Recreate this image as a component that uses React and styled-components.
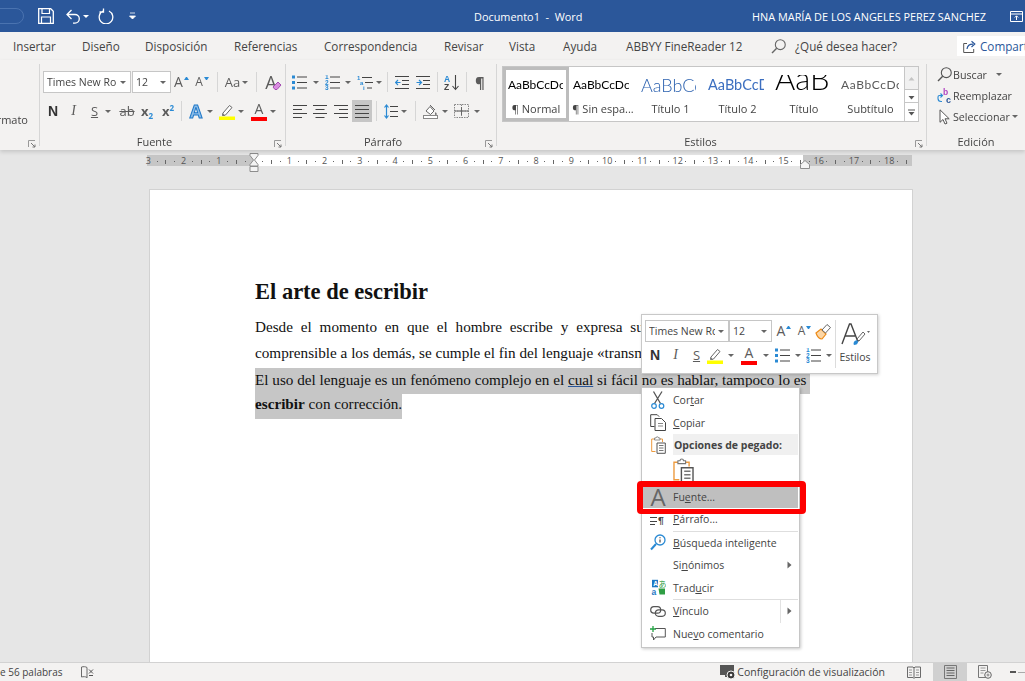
import * as React from "react";
import styled, { createGlobalStyle } from "styled-components";

const GlobalStyle = createGlobalStyle`
  html, body {
    margin: 0;
    padding: 0;
    background: #e6e6e6;
  }
  * {
    box-sizing: border-box;
  }
  svg {
    display: block;
    flex: none;
  }
`;

const UI_FONT = `"Open Sans", "Noto Sans", sans-serif`;
const GREY = "#5c5c5c";
const BLUE = "#2a8ad4";

const Svg = ({ w, h, children }) => (
  <svg width={w} height={h} viewBox={`0 0 ${w} ${h}`} fill="none">
    {children}
  </svg>
);

/* ---------- icons ---------- */

const SaveIcon = () => (
  <Svg w={16} h={16}>
    <path d="M.7.7h12l2.6 2.6v12H.7z" stroke="#fff" strokeWidth="1.3" />
    <path d="M4 1v4.5h7.5V1M3.5 15V9h9v6" stroke="#fff" strokeWidth="1.2" />
  </Svg>
);
const UndoIcon = () => (
  <Svg w={14} h={15}>
    <path d="M1.5 5.5H9a4.3 4.3 0 0 1 0 8.6H7M5.5 1L1 5.5 5.5 10" stroke="#fff" strokeWidth="1.3" />
  </Svg>
);
const RedoIcon = () => (
  <Svg w={16} h={16}>
    <path d="M5 3a6.8 6.8 0 1 0 6 0M5.5.5V4h-4" stroke="#fff" strokeWidth="1.3" />
  </Svg>
);
const CustomizeIcon = () => (
  <Svg w={7} h={8}>
    <path d="M1 1h5M.5 4h6l-3 3z" stroke="#fff" fill="#fff" strokeWidth=".8" />
  </Svg>
);
const RestoreIcon = () => (
  <Svg w={13} h={11}>
    <path d="M.5.5h12v10H.5zM.5 3h12M6.5 9V5M4.8 6.5l1.7-1.7 1.7 1.7" stroke="#fff" />
  </Svg>
);
const SearchIcon = ({ size = 15, color = "#666" }) => (
  <Svg w={size} h={size}>
    <circle cx={size * 0.62} cy={size * 0.38} r={size * 0.33} stroke={color} strokeWidth="1.1" />
    <path d={`M${size * 0.38} ${size * 0.62}L1 ${size - 1}`} stroke={color} strokeWidth="1.4" />
  </Svg>
);
const ShareIcon = () => (
  <Svg w={13} h={13}>
    <path d="M4 3.5H.7v9h10V9" stroke="#555" />
    <path d="M4 9c.4-3.3 3-4.8 6-4.8M8.5 1.2L11.8 4 8.5 7" stroke="#2b579a" strokeWidth="1.2" />
  </Svg>
);
const LauncherIcon = () => (
  <Svg w={8} h={8}>
    <path d="M.5 7V.5H7" stroke="#999" />
    <path d="M3 3l4 4M7 4.5V7H4.5" stroke="#777" />
  </Svg>
);
const Eraser = () => (
  <Svg w={10} h={10}>
    <path d="M1 6l5-5 3 3-4 4.5H3z" fill="#d98ce0" stroke="#a24bb0" />
  </Svg>
);
const PenBar = () => (
  <Svg w={16} h={17}>
    <path d="M4 10l6.5-7.5 2.5 2L6.5 12l-3 .5z" stroke="#666" fill="#fff" />
    <path d="M3.5 11l2 1.5" stroke="#666" />
    <rect x="0" y="13.5" width="16" height="3.5" fill="#ffff00" />
  </Svg>
);
const marker = (kind, i, y) => {
  if (kind === "bullet") return <rect key={i} x="0" y={y - 1.5} width="3" height="3" fill={BLUE} />;
  return (
    <text key={i} x="0" y={y + 2.3} fontSize="6.5" fontFamily="Liberation Sans, sans-serif" fontWeight="700" fill={BLUE}>
      {i + 1}
    </text>
  );
};
const ListIcon = ({ kind = "bullet" }) => (
  <Svg w={15} h={15}>
    {[2, 7.5, 13].map((y, i) => (
      <React.Fragment key={y}>
        {marker(kind, i, y)}
        <path d={`M5 ${y}h10`} stroke="#444" />
      </React.Fragment>
    ))}
  </Svg>
);
const MultilevelIcon = () => (
  <Svg w={16} h={15}>
    <text x="0" y="5" fontSize="6" fontWeight="700" fontFamily="Liberation Sans, sans-serif" fill={BLUE}>1</text>
    <text x="3" y="10" fontSize="6" fontWeight="700" fontFamily="Liberation Sans, sans-serif" fill={BLUE}>a</text>
    <text x="6" y="15" fontSize="6" fontWeight="700" fontFamily="Liberation Sans, sans-serif" fill={BLUE}>i</text>
    <path d="M5 2.5h10M8 7.5h8M10 13h5" stroke="#444" />
  </Svg>
);
const IndentIcon = ({ out }) => (
  <Svg w={14} h={13}>
    <path d="M0 .5h14M0 12.5h14M7 4.5h7M7 8.5h7" stroke="#444" />
    <path d={out ? "M5.5 6.5H.5M3 4L.5 6.5 3 9" : "M.5 6.5h5M3 4l2.5 2.5L3 9"} stroke={BLUE} strokeWidth="1.2" />
  </Svg>
);
const SortIcon = () => (
  <Svg w={16} h={17}>
    <text x="0" y="7.5" fontSize="8.5" fontWeight="700" fontFamily="Liberation Sans, sans-serif" fill={BLUE}>A</text>
    <text x="0" y="16" fontSize="8.5" fontWeight="700" fontFamily="Liberation Sans, sans-serif" fill="#444">Z</text>
    <path d="M11.5 1v14M8.5 12l3 3.5 3-3.5" stroke="#444" strokeWidth="1.1" />
  </Svg>
);
const ALIGN = {
  left: ["M0 .5h14", "M0 4.5h9", "M0 8.5h14", "M0 12.5h9"],
  center: ["M0 .5h14", "M2.5 4.5h9", "M0 8.5h14", "M2.5 12.5h9"],
  right: ["M0 .5h14", "M5 4.5h9", "M0 8.5h14", "M5 12.5h9"],
  justify: ["M0 .5h14", "M0 4.5h14", "M0 8.5h14", "M0 12.5h14"],
};
const AlignIcon = ({ mode }) => (
  <Svg w={14} h={13}>
    {ALIGN[mode].map((d) => (
      <path key={d} d={d} stroke="#444" />
    ))}
  </Svg>
);
const LineSpacingIcon = () => (
  <Svg w={14} h={15}>
    <path d="M6 2.5h8M6 7.5h8M6 12.5h8" stroke="#444" />
    <path d="M2.5 1v13M.5 3.5l2-2.5 2 2.5M.5 11.5l2 2.5 2-2.5" stroke={BLUE} strokeWidth="1.2" />
  </Svg>
);
const BucketIcon = () => (
  <Svg w={15} h={15}>
    <path d="M3 7l4-4.5L11 7l-3.5 3.5z" stroke="#666" fill="#fff" />
    <path d="M7 1l5 5" stroke="#666" />
    <path d="M12.5 8c1 1.3 1.5 2 1 2.7-.5.5-1.5.3-1.5-.7z" fill="#666" />
    <rect x=".5" y="11.5" width="14" height="3" fill="#fff" stroke="#888" />
  </Svg>
);
const BordersIcon = () => (
  <Svg w={15} h={14}>
    <path d="M.5.5h14v13H.5zM7.5.5v13M.5 7h14" stroke="#888" strokeDasharray="1.5 1" />
    <path d="M.5 7h14M7.5 3v8" stroke="#666" />
  </Svg>
);
const ScrollArrow = ({ dir = "down", bar, color = "#555" }) => (
  <Svg w={7} h={7}>
    {bar && <path d="M0 1h7" stroke={color} />}
    <path d={dir === "up" ? "M3.5 2l3 3.5h-6z" : "M.5 3h6l-3 3.5z"} fill={color} />
  </Svg>
);
const ReplaceIcon = () => (
  <Svg w={16} h={16}>
    <text x="6" y="7" fontSize="8.5" fontWeight="700" fontFamily="Liberation Sans, sans-serif" fill="#b146c2">b</text>
    <text x="9" y="15" fontSize="9" fontWeight="700" fontFamily="Liberation Sans, sans-serif" fill="#2b579a">c</text>
    <path d="M5 7.5H2.5A1.5 1.5 0 0 0 1 9v1.5a3 3 0 0 0 3 3h1M3.5 5.5l2 2-2 2" stroke={BLUE} strokeWidth="1.1" />
  </Svg>
);
const CursorIcon = () => (
  <Svg w={12} h={16}>
    <path d="M1 .8v12.5l3-2.8 2 4.5 2-.8-2-4.4h4.2z" stroke="#555" fill="#fff" />
  </Svg>
);
const PaintIcon = () => (
  <Svg w={17} h={17}>
    <path d="M1 10l5-4 5 5-4 5c-2.5 0-5-3-6-6z" fill="#fbd6a6" stroke="#ed8b17" strokeWidth="1.2" />
    <path d="M7 7l5-5.5 3.5 3L10.5 10z" fill="#fff" stroke="#666" />
  </Svg>
);
const StylesIcon = () => (
  <Svg w={30} h={24}>
    <path d="M2 21L9.5 1H11l7 18M5 13h10" stroke="#444" strokeWidth="1.4" />
    <path d="M14 22c-1.5-2 1-5.5 3.5-4.5 1 1 .5 3-1 4z" fill={BLUE} />
    <path d="M17 16l6-7 2 2-6 7z" fill="#fff" stroke="#666" />
    <path d="M27 8h3l-1.5 2z" fill="#666" />
  </Svg>
);
const ScissorsIcon = () => (
  <Svg w={14} h={18}>
    <path d="M2.5.5l7 12M11 .5l-7.5 12" stroke="#555" strokeWidth="1.3" />
    <circle cx="3" cy="15" r="2.3" stroke={BLUE} strokeWidth="1.2" />
    <circle cx="10.5" cy="15" r="2.3" stroke={BLUE} strokeWidth="1.2" />
  </Svg>
);
const CopyIcon = () => (
  <Svg w={16} h={17}>
    <path d="M4.5 12.5H.7V.7h6.5l2 2" stroke="#444" />
    <path d="M5 4.5h6.5l4 4v8H5z" fill="#fff" stroke="#444" />
    <path d="M8 9.5h5M8 12h5" stroke="#888" />
  </Svg>
);
const ClipboardIcon = ({ big }) => {
  const s = big ? 1.4 : 1;
  return (
    <svg width={15 * s} height={18 * s} viewBox="0 0 15 18" fill="none">
      <path d="M4.5 15.5H.7V3h3M9 3h2.5v3" stroke="#ed9b40" />
      <path d="M3.5 4V2H5a1.2 1.2 0 0 1 2.5 0H9v2z" fill="#fff" stroke="#777" strokeWidth=".8" />
      <path d="M6 7h8.300v10.300H6z" fill="#fff" stroke="#555" />
      <path d="M8 9.5h4.5M8 12h4.5M8 14.5h4.5" stroke="#777" />
    </svg>
  );
};
const ParagraphIcon = () => (
  <Svg w={16} h={12}>
    <path d="M0 .5h16M0 4.5h7M0 8.5h7M0 11.5h5" stroke="#444" />
    <text x="8" y="11.5" fontSize="10.5" fontWeight="700" fontFamily="Liberation Sans, sans-serif" fill="#444">¶</text>
  </Svg>
);
const SmartIcon = () => (
  <Svg w={16} h={17}>
    <circle cx="10" cy="6" r="5" stroke={BLUE} strokeWidth="1.3" />
    <path d="M6 10l-5 5.5" stroke={BLUE} strokeWidth="2" />
    <path d="M10 5.5v3M10 3.3v1" stroke="#444" strokeWidth="1.2" />
  </Svg>
);
const TranslateIcon = () => (
  <Svg w={15} h={17}>
    <path d="M1 .8h6v7.5H1z" fill="#1e79c4" />
    <text x="2.2" y="6.8" fontSize="6.5" fontWeight="700" fontFamily="Liberation Sans, sans-serif" fill="#fff">A</text>
    <text x="7.5" y="8" fontSize="8" fontFamily="Noto Sans CJK JP, sans-serif" fill="#2f9e44">あ</text>
    <text x=".5" y="16" fontSize="8.5" fontWeight="700" fontFamily="Liberation Sans, sans-serif" fill="#1e79c4">a</text>
    <path d="M7.5 9.5H14v6H8.5" fill="#2f9e44" />
  </Svg>
);
const LinkIcon = () => (
  <Svg w={16} h={11}>
    <rect x=".7" y=".7" width="10" height="6.5" rx="3.2" stroke="#555" strokeWidth="1.2" />
    <rect x="5.3" y="3.8" width="10" height="6.5" rx="3.2" stroke="#555" strokeWidth="1.2" />
  </Svg>
);
const CommentIcon = () => (
  <Svg w={16} h={15}>
    <path d="M5 2.5h10.3V11H6l-2.500 3v-3H2V7" stroke="#555" />
    <path d="M3 0v6M0 3h6" stroke="#25a244" strokeWidth="1.3" />
  </Svg>
);
const MenuArrow = () => (
  <Svg w={5} h={8}>
    <path d="M.5.5l4 3.5-4 3.5z" fill="#666" />
  </Svg>
);
const HourglassMarker = () => (
  <Svg w={10} h={19}>
    <path d="M1 .5h8v2L5.5 7 9 11.5V13H1v-1.500L4.5 7 1 2.5z" fill="#f4f4f4" stroke="#8d8d8d" />
    <path d="M1 13.5h8v5H1z" fill="#f4f4f4" stroke="#8d8d8d" />
  </Svg>
);
const RightIndentMarker = () => (
  <Svg w={10} h={9}>
    <path d="M.5 8.5v-4L5 .5l4.500 4v4z" fill="#f4f4f4" stroke="#8d8d8d" />
  </Svg>
);
const DisplayIcon = () => (
  <Svg w={16} h={15}>
    <path d="M0 0h14v10H0z" fill="#555" />
    <path d="M5 10h4v2H5z" fill="#555" />
    <circle cx="11" cy="10" r="4" fill="#3a3a3a" stroke="#f3f2f1" />
    <circle cx="11" cy="10" r="1.3" fill="#f3f2f1" />
  </Svg>
);
const ReadIcon = () => (
  <Svg w={14} h={13}>
    <path d="M.5 1H6l1 1 1-1h5.5v10.500H8l-1 1-1-1H.5zM7 2v10" stroke="#6b6b6b" />
    <path d="M2 4h3M2 6.5h3M9 4h3M9 6.5h3M2 9h3M9 9h3" stroke="#999" />
  </Svg>
);
const BookCheckIcon = () => (
  <Svg w={13} h={13}>
    <path d="M6 1.5C4.5.5 2.5.5.5 1v10c2-.5 4-.5 5.500.5M6 1.500V12" stroke="#6b6b6b" />
    <path d="M8 3.5l4 4M12 3.5l-4 4M8 9.5h4" stroke="#555" />
  </Svg>
);
const PrintLayoutIcon = () => (
  <Svg w={13} h={14}>
    <path d="M.5.5h12v13H.5z" stroke="#777" fill="#d0d0d0" />
    <path d="M2.5 3h8M2.5 5.5h8M2.5 8h8M2.5 10.5h8" stroke="#666" />
  </Svg>
);
const WebLayoutIcon = () => (
  <Svg w={14} h={14}>
    <path d="M.5.5h9v12H.5z" stroke="#777" />
    <path d="M2.5 3h5M2.5 5.5h5M2.5 8h3" stroke="#999" />
    <circle cx="10" cy="10" r="3.3" stroke="#666" fill="#f3f2f1" />
    <path d="M8.5 10h3M10 8.5v3" stroke="#666" strokeWidth=".7" />
  </Svg>
);

/* ---------- page frame ---------- */

const Root = styled.div`
  position: relative;
  width: 1025px;
  height: 681px;
  overflow: hidden;
  display: flex;
  flex-direction: column;
  font-family: ${UI_FONT};
  color: #444;
  filter: blur(0.35px);
`;

const TitleBar = styled.header`
  flex: none;
  height: 32px;
  background: #2b579a;
  color: #fff;
  display: flex;
  align-items: center;
  font-size: 10.9px;
`;

const QuickAccess = styled.div`
  flex: 0 0 474px;
  display: flex;
  align-items: center;
  overflow: hidden;
  height: 100%;
`;

const AutoSavePill = styled.div`
  flex: none;
  width: 38px;
  height: 16px;
  margin: 0 14px 0 -14px;
  border: 1px solid #4a73b0;
  border-radius: 8px;
`;

const QuickButton = styled.div`
  flex: none;
  display: flex;
  align-items: center;
  justify-content: center;
  width: ${(p) => p.$w}px;
  margin-left: ${(p) => p.$ml || 0}px;
`;

const DocTitle = styled.div`
  flex: 1;
  white-space: pre;
`;

const UserName = styled.div`
  flex: none;
  width: 258px;
  white-space: nowrap;
`;

const RestoreBox = styled.div`
  flex: none;
  width: 15px;
`;

const TabStrip = styled.nav`
  flex: none;
  height: 28px;
  background: #f3f2f1;
  display: flex;
  align-items: center;
  font-size: 11.7px;
  padding-left: 13px;
`;

const Tab = styled.div`
  flex: none;
  width: ${(p) => p.$w}px;
  white-space: nowrap;
`;

const TellMe = styled.div`
  flex: none;
  width: 186px;
  display: flex;
  align-items: center;
  gap: 9px;
`;

const ShareButton = styled.div`
  flex: none;
  height: 20px;
  width: 68px;
  background: #fff;
  color: #2b579a;
  display: flex;
  align-items: center;
  gap: 4px;
  padding-left: 6px;
  white-space: nowrap;
  overflow: hidden;
`;

/* ---------- ribbon ---------- */

const Ribbon = styled.section`
  position: relative;
  z-index: 2;
  flex: none;
  height: 90px;
  padding: 4px 0;
  background: #f3f2f1;
  box-shadow: 0 2px 4px rgba(0, 0, 0, 0.14);
  display: flex;
`;

const Group = styled.div`
  position: relative;
  flex: none;
  width: ${(p) => p.$w}px;
  height: 82px;
  padding: ${(p) => p.$pad || "7px 0 0"};
  border-right: ${(p) => (p.$last ? "none" : "1px solid #d6d6d6")};
  display: flex;
  flex-direction: column;
`;

const ClippedLabel = styled.div`
  position: absolute;
  right: 11px;
  top: 48px;
  font-size: 11px;
`;

const Row = styled.div`
  flex: none;
  height: 22px;
  display: flex;
  align-items: center;
  padding-left: ${(p) => p.$pl || 0}px;
  margin-bottom: ${(p) => p.$mb || 0}px;
`;

const GroupLabel = styled.div`
  margin-top: auto;
  margin-bottom: -3px;
  height: 14px;
  line-height: 14px;
  text-align: center;
  font-size: 11px;
  padding-right: ${(p) => p.$pr || 0}px;
`;

const Launcher = styled.div`
  position: absolute;
  right: 3px;
  bottom: -2px;
`;

const Combo = styled.div`
  flex: none;
  width: ${(p) => p.$w}px;
  height: 22px;
  margin-right: ${(p) => p.$mr || 0}px;
  background: #fff;
  border: 1px solid #c6c6c6;
  display: flex;
  align-items: center;
  gap: 3px;
  padding: 0 4px 0 3px;
  font-size: 10.5px;
  white-space: nowrap;
`;

const ComboText = styled.span`
  flex: 1;
  min-width: 0;
  overflow: hidden;
`;

const Tool = styled.div`
  position: relative;
  flex: none;
  width: ${(p) => p.$w || 20}px;
  height: 22px;
  margin-left: ${(p) => p.$ml || 0}px;
  display: flex;
  align-items: center;
  justify-content: center;
  background: ${(p) => (p.$active ? "#c6c6c6" : "transparent")};
`;

const Divider = styled.div`
  flex: none;
  width: 1px;
  height: 20px;
  margin: 0 ${(p) => p.$mr ?? 5}px 0 ${(p) => p.$ml ?? 5}px;
  background: #d6d6d6;
`;

const Caret = styled.i`
  display: block;
  flex: none;
  width: 0;
  height: 0;
  margin: ${(p) => p.$m || 0};
  border-style: solid;
  border-width: 3px 3px 0;
  border-color: ${(p) => p.$color || "#666"} transparent transparent;
`;

const Glyph = styled.span`
  font-family: ${(p) => p.$font || UI_FONT};
  font-size: ${(p) => p.$size || 14}px;
  font-weight: ${(p) => p.$weight || 400};
  font-style: ${(p) => (p.$italic ? "italic" : "normal")};
  color: ${(p) => p.$color || GREY};
  text-decoration: ${(p) => p.$line || "none"};
  line-height: 1;
  white-space: nowrap;
`;

const EffectGlyph = styled(Glyph)`
  color: #8dbde8;
  -webkit-text-stroke: 1px #1f78c8;
`;

const Script = styled.span`
  font-size: 8px;
  font-weight: 700;
  color: ${BLUE};
  position: relative;
  top: ${(p) => (p.$sup ? -5 : 3)}px;
`;

const EraserBadge = styled.div`
  position: absolute;
  right: -3px;
  bottom: 2px;
`;

const ColorLetter = styled.div`
  width: 16px;
  display: flex;
  flex-direction: column;
  align-items: center;
`;

const ColorBar = styled.div`
  width: 100%;
  height: 4px;
  margin-top: 1px;
  background: ${(p) => p.$color};
`;

const SizeCaret = styled.i`
  display: block;
  width: 5px;
  height: 3px;
  margin: -7px 0 0 1px;
  border-style: solid;
  border-width: ${(p) => (p.$up ? "0 2.5px 3px" : "3px 2.5px 0")};
  border-color: ${(p) => (p.$up ? "transparent transparent #2a8ad4" : "#2a8ad4 transparent transparent")};
`;

const Gallery = styled.div`
  margin-left: 5px;
  width: 417px;
  height: 56px;
  margin-top: -5px;
  background: #fff;
  border: 1px solid #c6c6c6;
  display: flex;
`;

const StyleItem = styled.div`
  flex: none;
  width: ${(p) => p.$w}px;
  height: 100%;
  padding-top: ${(p) => (p.$selected ? 2 : 5)}px;
  border: ${(p) => (p.$selected ? "3px solid #bdbdbd" : "none")};
  display: flex;
  flex-direction: column;
  align-items: center;
  overflow: hidden;
`;

const StylePreview = styled.div`
  align-self: flex-start;
  width: ${(p) => p.$clip}px;
  height: ${(p) => (p.$tall ? 19 : 26)}px;
  margin: ${(p) => (p.$tall ? "3px 0 4px 4px" : p.$selected ? "0 0 0 2px" : "0 0 0 4px")};
  display: flex;
  align-items: ${(p) => (p.$tall ? "flex-end" : "center")};
  overflow: hidden;
  white-space: nowrap;
  line-height: 1;
  font-family: "Lato", sans-serif;
  font-size: ${(p) => p.$size}px;
  font-weight: ${(p) => p.$weight || 400};
  color: ${(p) => p.$color || "#000"};
  letter-spacing: ${(p) => p.$spacing || 0}px;
`;

const StyleName = styled.div`
  margin-top: 3px;
  font-size: 11px;
  white-space: nowrap;
`;

const GalleryScroll = styled.div`
  flex: 1;
  border-left: 1px solid #c6c6c6;
  display: flex;
  flex-direction: column;
`;

const ScrollButton = styled.div`
  flex: ${(p) => p.$grow};
  display: flex;
  align-items: center;
  justify-content: center;
  background: ${(p) => (p.$disabled ? "#f1f1f1" : "#fff")};
  border-bottom: ${(p) => (p.$end ? "none" : "1px solid #c6c6c6")};
`;

const EditRow = styled.div`
  flex: none;
  height: 21px;
  display: flex;
  align-items: center;
  padding-left: 9px;
  font-size: 10.7px;
  white-space: nowrap;
`;

const EditIcon = styled.div`
  flex: none;
  width: 17px;
  display: flex;
  justify-content: center;
`;

/* ---------- ruler + document ---------- */

const Workspace = styled.main`
  flex: 1;
  min-height: 0;
  background: #e6e6e6;
  display: flex;
  flex-direction: column;
  padding: 5px 0 0 149px;
`;

const Ruler = styled.div`
  position: relative;
  flex: none;
  width: 765px;
  height: 11px;
  margin: 0 0 23px -2px;
  display: flex;
  align-items: center;
  background: linear-gradient(90deg, #c6c6c6 107px, #fff 107px, #fff 656px, #c6c6c6 656px);
  font-size: 9px;
  color: #555;
`;

const RulerMarks = styled.div`
  display: flex;
  margin-left: -3.2px;
`;

const RulerMark = styled.span`
  flex: none;
  width: 8.813px;
  height: 11px;
  line-height: 11px;
  text-align: center;
`;

const RulerDot = styled.i`
  display: inline-block;
  vertical-align: middle;
  background: #666;
  width: 1px;
  height: ${(p) => (p.$tick ? 4 : 1)}px;
`;

const FirstIndent = styled.div`
  position: absolute;
  left: 102px;
  top: -2px;
`;

const RightIndent = styled.div`
  position: absolute;
  left: 653px;
  top: 5px;
`;

const Page = styled.article`
  flex: 1;
  width: 764px;
  padding: 89px 105px 0;
  background: #fff;
  border: 1px solid #d2d2d2;
  border-bottom: none;
  font-family: "Liberation Serif", "Times New Roman", serif;
  color: #111;
`;

const DocHeading = styled.h1`
  margin: 0 0 9px;
  height: 26px;
  line-height: 26px;
  font-size: 22.5px;
  font-weight: 700;
`;

const DocLine = styled.div`
  height: 25.6px;
  line-height: ${(p) => p.$lh || 25.6}px;
  font-size: 15.2px;
  white-space: ${(p) => (p.$justify ? "normal" : "nowrap")};
  text-align: ${(p) => (p.$justify ? "justify" : "left")};
  text-align-last: ${(p) => (p.$justify ? "justify" : "auto")};
  margin-top: ${(p) => p.$mt || 0}px;
  margin-right: ${(p) => p.$mr || 0}px;
  background: ${(p) => (p.$selected ? "#c6c6c6" : "transparent")};
  width: ${(p) => (p.$fit ? "fit-content" : "auto")};
`;

const Misspelled = styled.span`
  text-decoration: underline;
  text-decoration-color: #2b579a;
`;

/* ---------- status bar ---------- */

const StatusBar = styled.footer`
  flex: none;
  height: 19px;
  background: #f3f2f1;
  border-top: 1px solid #d2d2d2;
  display: flex;
  align-items: center;
  font-size: 10.5px;
  white-space: nowrap;
`;

const StatusWords = styled.div`
  flex: none;
  width: 81px;
  font-size: 10px;
`;

const StatusDisplay = styled.div`
  flex: 1;
  display: flex;
  align-items: center;
  justify-content: flex-end;
  gap: 1px;
`;

const ViewButton = styled.div`
  flex: none;
  width: ${(p) => p.$w}px;
  height: 18px;
  margin-left: ${(p) => p.$ml || 0}px;
  display: flex;
  align-items: center;
  justify-content: center;
  background: ${(p) => (p.$active ? "#d0d0d0" : "transparent")};
`;

const ZoomMinus = styled.div`
  flex: none;
  width: 6px;
  height: 2px;
  margin: 0 1px 0 12px;
  background: #555;
`;

const ZoomTrack = styled.div`
  flex: none;
  width: 7px;
  height: 1px;
  background: #aaa;
`;

/* ---------- overlays ---------- */

const MiniToolbar = styled.div`
  position: absolute;
  left: 641px;
  top: 314px;
  z-index: 5;
  width: 237px;
  height: 60px;
  padding: 5px 3px;
  background: #fff;
  border: 1px solid #c8c8c8;
  box-shadow: 1px 1px 3px rgba(0, 0, 0, 0.18);
  display: flex;
`;

const MiniMain = styled.div`
  flex: none;
  width: 190px;
  display: flex;
  flex-direction: column;
  gap: 2px;
`;

const MiniStyles = styled.div`
  flex: 1;
  border-left: 1px solid #dcdcdc;
  display: flex;
  flex-direction: column;
  align-items: center;
  padding-top: 3px;
  font-size: 10.5px;
  gap: 3px;
`;

const ContextMenu = styled.div`
  position: absolute;
  left: 641px;
  top: 387px;
  z-index: 4;
  width: 159px;
  height: 261px;
  padding: 1px;
  background: #fff;
  border: 1px solid #c6c6c6;
  box-shadow: 1px 1px 3px rgba(0, 0, 0, 0.22);
  font-size: 10.5px;
`;

const MenuItem = styled.div`
  height: ${(p) => p.$h || 22.5}px;
  display: flex;
  align-items: center;
  background: ${(p) => p.$bg || "transparent"};
  white-space: nowrap;
`;

const MenuIcon = styled.div`
  flex: none;
  width: 30px;
  height: 100%;
  display: flex;
  align-items: center;
  justify-content: center;
  background: ${(p) => (p.$clear ? "transparent" : "#fff")};
`;

const MenuLabel = styled.div`
  flex: 1;
  font-weight: ${(p) => (p.$bold ? 700 : 400)};
  padding-left: ${(p) => p.$pl ?? 0}px;
`;

const MenuSeparator = styled.div`
  height: 1px;
  margin-left: 30px;
  background: #dedede;
`;

const SubArrow = styled.div`
  flex: none;
  width: 18px;
  height: 100%;
  display: flex;
  align-items: center;
  justify-content: center;
  border-left: ${(p) => (p.$split ? "1px solid #e2e2e2" : "none")};
`;

const Key = styled.span`
  text-decoration: underline;
`;

const Callout = styled.div`
  position: absolute;
  left: 637px;
  top: 481px;
  z-index: 6;
  width: 169px;
  height: 33px;
  border: 6px solid #fe0000;
  border-bottom-width: 5px;
  border-radius: 4px;
  pointer-events: none;
`;

/* ---------- data ---------- */

const TABS = [
  ["Insertar", 69],
  ["Diseño", 63],
  ["Disposición", 89],
  ["Referencias", 90],
  ["Correspondencia", 120],
  ["Revisar", 65],
  ["Vista", 54],
  ["Ayuda", 63],
  ["ABBYY FineReader 12", 145],
];

const STYLES = [
  { name: "¶ Normal", w: 66, size: 12, clip: 55, selected: true },
  { name: "¶ Sin espa...", w: 68, size: 12, clip: 56 },
  { name: "Título 1", w: 67, size: 18, clip: 55, weight: 300, color: "#2e63b0" },
  { name: "Título 2", w: 67, size: 14.5, clip: 56, color: "#3c6fc0" },
  { name: "Título", w: 66, size: 31, clip: 60, weight: 300, tall: true },
  { name: "Subtítulo", w: 67, size: 12, clip: 58, color: "#5a5a5a", spacing: 0.6 },
];

const rulerMarks = [];
for (let i = -12; i <= 74; i++) {
  rulerMarks.push(i);
}

const RulerContent = () =>
  rulerMarks.map((i) => (
    <RulerMark key={i}>
      {i === 0 ? null : i % 4 === 0 ? Math.abs(i / 4) : <RulerDot $tick={i % 2 === 0} />}
    </RulerMark>
  ));

const App = () => {
  return (
    <Root>
      <GlobalStyle />

      <TitleBar>
        <QuickAccess>
          <AutoSavePill />
          <QuickButton $w={16}><SaveIcon /></QuickButton>
          <QuickButton $w={14} $ml={12}><UndoIcon /></QuickButton>
          <QuickButton $w={12}><Caret $color="#fff" /></QuickButton>
          <QuickButton $w={16} $ml={6}><RedoIcon /></QuickButton>
          <QuickButton $w={7} $ml={15}><CustomizeIcon /></QuickButton>
        </QuickAccess>
        <DocTitle>Documento1  -  Word</DocTitle>
        <UserName>HNA MARÍA DE LOS ANGELES PEREZ SANCHEZ</UserName>
        <RestoreBox><RestoreIcon /></RestoreBox>
      </TitleBar>

      <TabStrip>
        {TABS.map(([label, w]) => (
          <Tab key={label} $w={w}>{label}</Tab>
        ))}
        <TellMe>
          <SearchIcon size={15} />
          ¿Qué desea hacer?
        </TellMe>
        <ShareButton>
          <ShareIcon />
          Compartir
        </ShareButton>
      </TabStrip>

      <Ribbon>
        <Group $w={40}>
          <ClippedLabel>rmato</ClippedLabel>
          <Launcher><LauncherIcon /></Launcher>
        </Group>

        <Group $w={246}>
          <Row $pl={3} $mb={7}>
            <Combo $w={88} $mr={1}>
              <ComboText>Times New Ro</ComboText>
              <Caret />
            </Combo>
            <Combo $w={39}>
              <ComboText>12</ComboText>
              <Caret />
            </Combo>
            <Tool $w={21}>
              <Glyph $size={14}>A</Glyph>
              <SizeCaret $up />
            </Tool>
            <Tool $w={20}>
              <Glyph $size={12}>A</Glyph>
              <SizeCaret />
            </Tool>
            <Divider $ml={5} $mr={6} />
            <Tool $w={17}><Glyph $size={13}>Aa</Glyph></Tool>
            <Caret $m="0 8px 0 1px" />
            <Divider $ml={0} $mr={6} />
            <Tool $w={16}>
              <Glyph $size={18}>A</Glyph>
              <EraserBadge><Eraser /></EraserBadge>
            </Tool>
          </Row>
          <Row $pl={3}>
            <Tool><Glyph $size={14} $weight={700} $color="#333" $font='"Liberation Sans", sans-serif'>N</Glyph></Tool>
            <Tool $w={21}><Glyph $size={14} $italic $font='"Liberation Serif", serif'>I</Glyph></Tool>
            <Tool $w={21}><Glyph $size={13} $line="underline">S</Glyph></Tool>
            <Caret />
            <Tool $w={20} $ml={6}><Glyph $size={13} $line="line-through">ab</Glyph></Tool>
            <Tool><Glyph $size={13} $weight={700}>x<Script>2</Script></Glyph></Tool>
            <Tool $ml={1}><Glyph $size={13} $weight={700}>x<Script $sup>2</Script></Glyph></Tool>
            <Divider $ml={3} $mr={4} />
            <Tool><EffectGlyph $size={18} $weight={700}>A</EffectGlyph></Tool>
            <Caret $m="0 5px 0 1px" />
            <Tool $w={18}><PenBar /></Tool>
            <Caret $m="0 5px 0 2px" />
            <Tool $w={20}>
              <ColorLetter>
                <Glyph $size={14}>A</Glyph>
                <ColorBar $color="#fe0000" />
              </ColorLetter>
            </Tool>
            <Caret $m="0 0 0 1px" />
          </Row>
          <GroupLabel $pr={16}>Fuente</GroupLabel>
          <Launcher><LauncherIcon /></Launcher>
        </Group>

        <Group $w={211}>
          <Row $pl={6} $mb={7}>
            <ListIcon />
            <Caret $m="0 6px 0 6px" />
            <ListIcon kind="number" />
            <Caret $m="0 6px 0 5px" />
            <MultilevelIcon />
            <Caret $m="0 0 0 3px" />
            <Divider $ml={5} $mr={7} />
            <IndentIcon out />
            <Tool $w={7} />
            <IndentIcon />
            <Divider $ml={7} $mr={6} />
            <SortIcon />
            <Divider $ml={6} $mr={8} />
            <Glyph $size={15} $weight={700}>¶</Glyph>
          </Row>
          <Row $pl={4}>
            <Tool><AlignIcon mode="left" /></Tool>
            <Tool><AlignIcon mode="center" /></Tool>
            <Tool $w={21}><AlignIcon mode="right" /></Tool>
            <Tool $ml={1} $active><AlignIcon mode="justify" /></Tool>
            <Divider $ml={4} $mr={6} />
            <Tool $w={15}><LineSpacingIcon /></Tool>
            <Caret $m="0 0 0 3px" />
            <Divider $ml={8} $mr={7} />
            <BucketIcon />
            <Caret $m="0 6px 0 4px" />
            <BordersIcon />
            <Caret $m="0 0 0 5px" />
          </Row>
          <GroupLabel $pr={16}>Párrafo</GroupLabel>
          <Launcher><LauncherIcon /></Launcher>
        </Group>

        <Group $w={430}>
          <Gallery>
            {STYLES.map((s) => (
              <StyleItem key={s.name} $w={s.w} $selected={s.selected}>
                <StylePreview
                  $size={s.size}
                  $clip={s.clip}
                  $color={s.color}
                  $weight={s.weight}
                  $spacing={s.spacing}
                  $selected={s.selected}
                  $tall={s.tall}
                >
                  {s.tall ? "AaB" : "AaBbCcDc"}
                </StylePreview>
                <StyleName>{s.name}</StyleName>
              </StyleItem>
            ))}
            <GalleryScroll>
              <ScrollButton $grow={24} $disabled><ScrollArrow dir="up" color="#c4c4c4" /></ScrollButton>
              <ScrollButton $grow={13}><ScrollArrow /></ScrollButton>
              <ScrollButton $grow={19} $end><ScrollArrow bar /></ScrollButton>
            </GalleryScroll>
          </Gallery>
          <GroupLabel $pr={22}>Estilos</GroupLabel>
          <Launcher><LauncherIcon /></Launcher>
        </Group>

        <Group $w={98} $last $pad="0">
          <EditRow>
            <EditIcon><SearchIcon size={15} color="#555" /></EditIcon>
            Buscar
            <Caret $m="0 0 0 9px" />
          </EditRow>
          <EditRow>
            <EditIcon><ReplaceIcon /></EditIcon>
            Reemplazar
          </EditRow>
          <EditRow>
            <EditIcon><CursorIcon /></EditIcon>
            Seleccionar
            <Caret $m="0 0 0 2px" />
          </EditRow>
          <GroupLabel>Edición</GroupLabel>
        </Group>
      </Ribbon>

      <Workspace>
        <Ruler>
          <RulerMarks><RulerContent /></RulerMarks>
          <FirstIndent><HourglassMarker /></FirstIndent>
          <RightIndent><RightIndentMarker /></RightIndent>
        </Ruler>
        <Page>
          <DocHeading>El arte de escribir</DocHeading>
          <DocLine $justify>Desde el momento en que el hombre escribe y expresa su pensamiento de manera,</DocLine>
          <DocLine>comprensible a los demás, se cumple el fin del lenguaje «transmitir».</DocLine>
          <DocLine $selected $mt={3} $mr={-3} $lh={23}>
            El uso del lenguaje es un fenómeno complejo en el <Misspelled>cual</Misspelled> si fácil no es hablar, tampoco lo es
          </DocLine>
          <DocLine $selected $fit $lh={20}>
            <b>escribir</b> con corrección.
          </DocLine>
        </Page>
      </Workspace>

      <StatusBar>
        <StatusWords>e 56 palabras</StatusWords>
        <BookCheckIcon />
        <StatusDisplay>
          <DisplayIcon />
          Configuración de visualización
          <ViewButton $w={22} $ml={17}><ReadIcon /></ViewButton>
          <ViewButton $w={34} $ml={7} $active><PrintLayoutIcon /></ViewButton>
          <ViewButton $w={24} $ml={5}><WebLayoutIcon /></ViewButton>
          <ZoomMinus />
          <ZoomTrack />
        </StatusDisplay>
      </StatusBar>

      <MiniToolbar>
        <MiniMain>
          <Row>
            <Combo $w={84}>
              <ComboText>Times New Rc</ComboText>
              <Caret />
            </Combo>
            <Combo $w={43}>
              <ComboText>12</ComboText>
              <Caret />
            </Combo>
            <Tool $w={22} $ml={1}>
              <Glyph $size={14}>A</Glyph>
              <SizeCaret $up />
            </Tool>
            <Tool $w={19}>
              <Glyph $size={12}>A</Glyph>
              <SizeCaret />
            </Tool>
            <Tool $w={19}><PaintIcon /></Tool>
          </Row>
          <Row>
            <Tool><Glyph $size={14} $weight={700} $color="#333" $font='"Liberation Sans", sans-serif'>N</Glyph></Tool>
            <Tool $w={21}><Glyph $size={14} $italic $font='"Liberation Serif", serif'>I</Glyph></Tool>
            <Tool $w={21}><Glyph $size={13} $line="underline">S</Glyph></Tool>
            <Tool $w={16}><PenBar /></Tool>
            <Caret $m="0 7px 0 5px" />
            <Tool $w={16}>
              <ColorLetter>
                <Glyph $size={14}>A</Glyph>
                <ColorBar $color="#fe0000" />
              </ColorLetter>
            </Tool>
            <Caret $m="0 6px 0 6px" />
            <ListIcon />
            <Caret $m="0 5px 0 5px" />
            <ListIcon kind="number" />
            <Caret $m="0 0 0 5px" />
          </Row>
        </MiniMain>
        <MiniStyles>
          <StylesIcon />
          Estilos
        </MiniStyles>
      </MiniToolbar>

      <ContextMenu>
        <MenuItem>
          <MenuIcon><ScissorsIcon /></MenuIcon>
          <MenuLabel>Cor<Key>t</Key>ar</MenuLabel>
        </MenuItem>
        <MenuItem>
          <MenuIcon><CopyIcon /></MenuIcon>
          <MenuLabel><Key>C</Key>opiar</MenuLabel>
        </MenuItem>
        <MenuItem $h={21} $bg="#f0f0f0">
          <MenuIcon><ClipboardIcon /></MenuIcon>
          <MenuLabel $bold $pl={1}>Opciones de pegado:</MenuLabel>
        </MenuItem>
        <MenuItem $h={31}>
          <MenuIcon />
          <ClipboardIcon big />
        </MenuItem>
        <MenuItem $h={22} $bg="#bfbfbf">
          <MenuIcon $clear>
            <Glyph $size={24} $color="#666">A</Glyph>
          </MenuIcon>
          <MenuLabel>Fu<Key>e</Key>nte...</MenuLabel>
        </MenuItem>
        <MenuItem>
          <MenuIcon><ParagraphIcon /></MenuIcon>
          <MenuLabel><Key>P</Key>árrafo...</MenuLabel>
        </MenuItem>
        <MenuSeparator />
        <MenuItem>
          <MenuIcon><SmartIcon /></MenuIcon>
          <MenuLabel><Key>B</Key>úsqueda inteligente</MenuLabel>
        </MenuItem>
        <MenuItem>
          <MenuIcon />
          <MenuLabel>Si<Key>n</Key>ónimos</MenuLabel>
          <SubArrow><MenuArrow /></SubArrow>
        </MenuItem>
        <MenuItem>
          <MenuIcon><TranslateIcon /></MenuIcon>
          <MenuLabel>Trad<Key>u</Key>cir</MenuLabel>
        </MenuItem>
        <MenuSeparator />
        <MenuItem>
          <MenuIcon><LinkIcon /></MenuIcon>
          <MenuLabel><Key>V</Key>ínculo</MenuLabel>
          <SubArrow $split><MenuArrow /></SubArrow>
        </MenuItem>
        <MenuItem>
          <MenuIcon><CommentIcon /></MenuIcon>
          <MenuLabel>Nue<Key>v</Key>o comentario</MenuLabel>
        </MenuItem>
      </ContextMenu>

      <Callout />
    </Root>
  );
};

export default App;
